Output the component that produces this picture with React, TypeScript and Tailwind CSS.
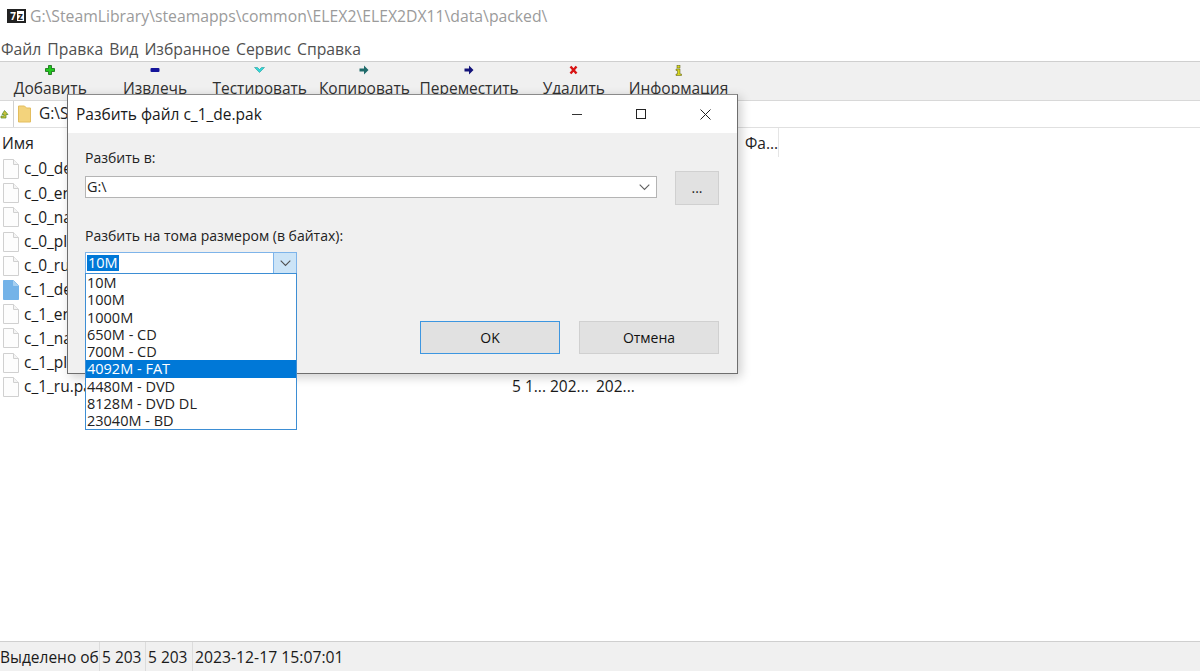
import { ReactNode } from "react";

const font = "font-['Open_Sans','Noto_Sans',sans-serif]";

const files = [
  "c_0_de.pak",
  "c_0_en.pak",
  "c_0_na.pak",
  "c_0_pl.pak",
  "c_0_ru.pak",
  "c_1_de.pak",
  "c_1_en.pak",
  "c_1_na.pak",
  "c_1_pl.pak",
  "c_1_ru.pak",
];

const sizes = ["10M", "100M", "1000M", "650M - CD", "700M - CD", "4092M - FAT", "4480M - DVD", "8128M - DVD DL", "23040M - BD"];

function Plus() {
  return (
    <svg width="10" height="10" viewBox="0 0 10 10">
      <path d="M3.500 0.500h3v3h3v3h-3v3h-3v-3h-3v-3h3z" fill="#22c71f" stroke="#0f6d10" strokeWidth="0.8" />
    </svg>
  );
}

function Minus() {
  return (
    <svg width="10" height="10" viewBox="0 0 10 10">
      <rect x="0.500" y="3" width="9" height="4" rx="1" fill="#14149a" />
    </svg>
  );
}

function Check() {
  return (
    <svg width="11" height="10" viewBox="0 0 11 10">
      <path d="M0.500 2.500h3l2 2 2-2h3l-5 5z" fill="#2fd8d8" stroke="#2a9a9a" strokeWidth="0.6" />
    </svg>
  );
}

function Arrow({ color }: { color: string }) {
  return (
    <svg width="10" height="10" viewBox="0 0 10 10">
      <path d="M0.500 3.500h4.500v-3l4.500 4.500-4.500 4.500v-3h-4.500z" fill={color} />
    </svg>
  );
}

function Cross() {
  return (
    <svg width="9" height="10" viewBox="0 0 9 10">
      <path d="M1.500 1.500l6 7M7.500 1.500l-6 7" stroke="#d81414" strokeWidth="2.400" />
    </svg>
  );
}

function Info() {
  return (
    <svg width="7" height="11" viewBox="0 0 7 11">
      <rect x="2" y="0.500" width="3" height="2.500" fill="#d8d820" stroke="#55550a" strokeWidth="0.5" />
      <path d="M1 4h4v5h1.500v1.500h-5.500v-1.500h1.500v-3.500h-1.500z" fill="#d8d820" stroke="#55550a" strokeWidth="0.5" />
    </svg>
  );
}

function FileIcon({ selected }: { selected?: boolean }) {
  return (
    <svg width="16" height="20" viewBox="0 0 16 20" className="shrink-0">
      <path
        d="M0.500 0.500h10l5 5v14h-15z"
        fill={selected ? "#74b3e8" : "#fdfdfd"}
        stroke={selected ? "#74b3e8" : "#d0d0d0"}
      />
      <path d="M10.500 0.500v5h5" fill={selected ? "#a8d0f0" : "#f4f4f4"} stroke={selected ? "#a8d0f0" : "#d0d0d0"} />
    </svg>
  );
}

function Chevron({ color = "#606060" }: { color?: string }) {
  return (
    <svg width="11" height="7" viewBox="0 0 11 7">
      <path d="M0.700 0.700l4.800 4.800 4.800-4.800" fill="none" stroke={color} strokeWidth="1.100" />
    </svg>
  );
}

function ToolItem({ icon, label }: { icon: ReactNode; label: string }) {
  return (
    <div className="w-[104.700px] shrink-0 flex flex-col items-center">
      <div className="h-[14px] flex items-center justify-center">{icon}</div>
      <span className="mt-[1px] text-[15.500px] leading-[21px] text-[#303030] whitespace-nowrap">{label}</span>
    </div>
  );
}

function Row({ name, selected }: { name: string; selected?: boolean }) {
  return (
    <div className="h-[24.200px] flex items-center text-[15.500px] text-[#1a1a1a]">
      <div className="w-[512px] shrink-0 flex items-center pl-[3px] gap-[5px]">
        <FileIcon selected={selected} />
        <span>{name}</span>
      </div>
      <span className="w-[38px] shrink-0">5 1...</span>
      <span className="w-[46px] shrink-0">202...</span>
      <span>202...</span>
    </div>
  );
}

function Dialog() {
  return (
    <div className="absolute left-[67px] top-[94px] w-[671px] h-[280px] bg-[#f0f0f0] border border-[#6e6e6e] border-t-[#8a8a8a] shadow-[3px_3px_10px_rgba(0,0,0,0.2)] flex flex-col">
      <div className="h-[38px] bg-white flex items-center justify-between shrink-0">
        <span className="pl-[8px] pt-[2px] text-[15.500px] text-[#1a1a1a]">Разбить файл c_1_de.pak</span>
        <div className="flex items-center">
          <div className="w-[64px] flex justify-center">
            <div className="w-[10px] h-px bg-[#333]" />
          </div>
          <div className="w-[64px] flex justify-center">
            <div className="w-[10px] h-[10px] border border-[#222]" />
          </div>
          <div className="w-[64px] flex justify-center">
            <svg width="11" height="11" viewBox="0 0 11 11">
              <path d="M0.500 0.500l10 10M10.500 0.500l-10 10" stroke="#222" strokeWidth="1" />
            </svg>
          </div>
        </div>
      </div>
      <div className="flex-1 pl-[17px] pr-[18px] pt-[14px] flex flex-col text-[14px] text-[#222]">
        <span className="leading-[21px] h-[21px]">Разбить в:</span>
        <div className="flex items-start">
          <div className="w-[573px] h-[22px] mt-[8px] bg-white border border-[#b4b4b4] flex items-center justify-between pl-[1px] pr-[6px]">
            <span className="leading-none text-[14.500px]">G:\</span>
            <Chevron />
          </div>
          <button className="ml-[18px] mt-[3px] w-[44px] h-[34px] bg-[#e1e1e1] border border-[#d0d0d0] text-[14px] leading-none">...</button>
        </div>
        <span className="mt-[20px] leading-[21px] h-[21px]">Разбить на тома размером (в байтах):</span>
        <div className="relative mt-[6px] w-[212px] h-[22px] bg-white border border-[#7eb4ea] flex items-center justify-between text-[14.500px]">
          <span className="ml-[1px] px-[1px] bg-[#0078d7] text-white leading-[16px] h-[16px]">10M</span>
          <div className="w-[23px] h-full bg-[#cce4f7] border-l border-[#7eb4ea] flex items-center justify-center">
            <Chevron color="#505050" />
          </div>
          <div className="absolute left-[-1px] top-[20px] w-[212px] bg-white border border-[#3d8ed4] flex flex-col z-10">
            {sizes.map((s) => (
              <div
                key={s}
                className={
                  s === "4092M - FAT"
                    ? "h-[17.250px] pl-[1px] leading-[17px] whitespace-nowrap bg-[#0078d7] text-white"
                    : "h-[17.250px] pl-[1px] leading-[17px] whitespace-nowrap text-[#222]"
                }
              >
                {s}
              </div>
            ))}
          </div>
        </div>
        <div className="mt-[47px] flex justify-end gap-[19px]">
          <button className="w-[140px] h-[33px] bg-[#e1e1e1] border-[1.500px] border-[#3d96e0] text-[14px] text-[#111]">OK</button>
          <button className="w-[140px] h-[33px] bg-[#e1e1e1] border border-[#d0d0d0] text-[14px] text-[#111]">Отмена</button>
        </div>
      </div>
    </div>
  );
}

export default function App() {
  return (
    <div className={`relative w-[1200px] h-[671px] overflow-hidden bg-white flex flex-col ${font}`}>
      <div className="h-[38px] flex items-start pl-[7px] pt-[6px] shrink-0">
        <div className="w-[19px] h-[14px] mt-[3px] border-2 border-[#222] bg-white flex items-center text-[10px] font-bold leading-none">
          <span className="bg-[#222] text-white w-[8px] h-full text-center">7</span>
          <span className="pl-[1px] text-[#222]">z</span>
        </div>
        <span className="ml-[4px] text-[15.750px] leading-[21px] text-[#9b9b9b]">G:\SteamLibrary\steamapps\common\ELEX2\ELEX2DX11\data\packed\</span>
      </div>
      <div className="h-[23px] flex items-center pl-[1px] gap-[6px] text-[15.750px] text-[#505050] shrink-0">
        <span>Файл</span>
        <span>Правка</span>
        <span>Вид</span>
        <span>Избранное</span>
        <span>Сервис</span>
        <span>Справка</span>
      </div>
      <div className="h-[40px] bg-[#f0f0f0] border-t border-[#cfcfcf] border-b border-b-[#d8d8d8] pt-[1px] shrink-0 overflow-hidden">
        <div className="flex -ml-[2px]">
          <ToolItem icon={<Plus />} label="Добавить" />
          <ToolItem icon={<Minus />} label="Извлечь" />
          <ToolItem icon={<Check />} label="Тестировать" />
          <ToolItem icon={<Arrow color="#1f6a6a" />} label="Копировать" />
          <ToolItem icon={<Arrow color="#14147a" />} label="Переместить" />
          <ToolItem icon={<Cross />} label="Удалить" />
          <ToolItem icon={<Info />} label="Информация" />
        </div>
      </div>
      <div className="h-[27px] flex items-center shrink-0 border-b border-[#e0e0e0]">
        <svg width="9" height="9" viewBox="0 0 9 9" className="shrink-0">
          <path d="M4.500 0.500l3.500 4h-2v3.500h-5v-2h3v-1.500h-2z" fill="#c9c23a" stroke="#4d8a2a" strokeWidth="0.7" />
        </svg>
        <div className="ml-[4px] flex-1 h-full border-l border-[#d0d0d0] flex items-center pl-[4px] gap-[8px]">
          <svg width="13" height="18" viewBox="0 0 13 18">
            <path d="M0.500 1h6l2 2h4v14h-12z" fill="#f3d37c" stroke="#e3bd5e" />
          </svg>
          <span className="text-[15.500px] text-[#222]">G:\SteamLibrary</span>
        </div>
      </div>
      <div className="h-[29px] flex items-center shrink-0 text-[15.500px] text-[#222]">
        <span className="w-[745px] pl-[2px] pt-[2px] shrink-0">Имя</span>
        <span className="w-[34px] border-r border-[#e5e5e5] h-full flex items-center pt-[2px]">Фа...</span>
      </div>
      <div className="flex-1 min-h-0">
        {files.map((f) => (
          <Row key={f} name={f} selected={f === "c_1_de.pak"} />
        ))}
      </div>
      <div className="h-[30px] bg-[#f0f0f0] border-t border-[#cfcfcf] flex items-center shrink-0 text-[15.500px] text-[#1a1a1a] whitespace-nowrap">
        <span className="w-[100px] border-r border-[#dcdcdc] h-full flex items-center overflow-hidden pt-[3px]">Выделено об</span>
        <span className="w-[46px] pl-[2px] border-r border-[#dcdcdc] h-full flex items-center pt-[3px]">5 203</span>
        <span className="w-[47px] pl-[2px] border-r border-[#dcdcdc] h-full flex items-center pt-[3px]">5 203</span>
        <span className="pl-[2px] pt-[3px] text-[15.750px]">2023-12-17 15:07:01</span>
      </div>
      <Dialog />
    </div>
  );
}
